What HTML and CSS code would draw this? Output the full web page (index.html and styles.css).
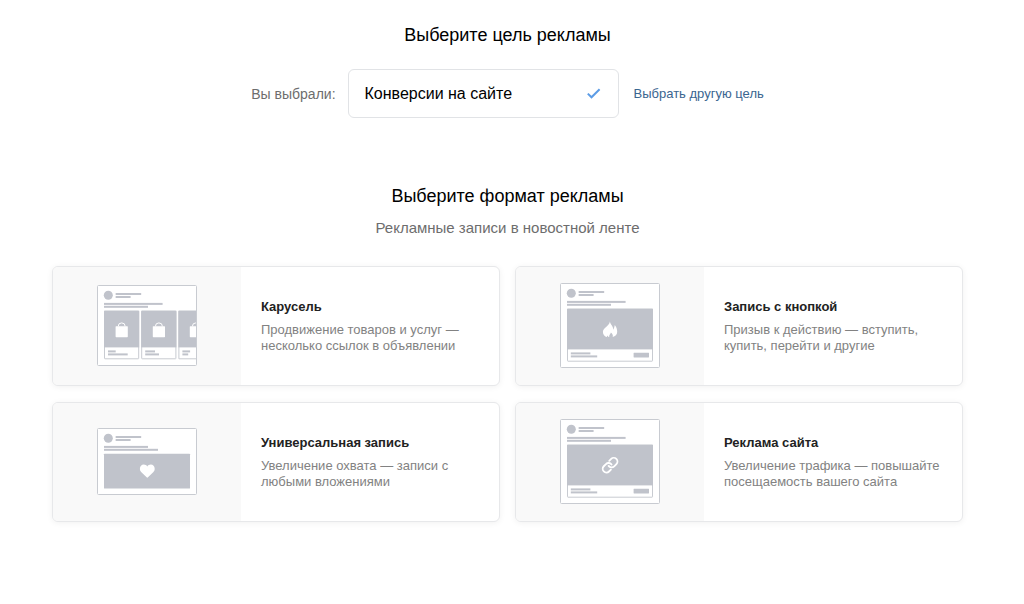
FILE: index.html
```html
<!DOCTYPE html>
<html lang="ru">
<head>
<meta charset="utf-8">
<meta name="viewport" content="width=device-width, initial-scale=1">
<title>Новое объявление</title>
<link rel="stylesheet" href="styles.css">
</head>
<body>
<svg class="defs" aria-hidden="true">
  <symbol id="post-head" viewBox="0 0 100 24">
    <circle cx="11.3" cy="10.3" r="4.5"/>
    <rect x="18.6" y="8" width="25.6" height="2" rx=".5"/>
    <rect x="18.6" y="10.9" width="15" height="2" rx=".5"/>
  </symbol>
</svg>
<main class="page">
  <section class="goal">
    <h2 class="heading">Выберите цель рекламы</h2>
    <div class="goal-row">
      <span class="goal-label" id="goal-label">Вы выбрали:</span>
      <button class="goal-box" type="button" aria-describedby="goal-label">
        <span>Конверсии на сайте</span>
        <svg class="check" viewBox="0 0 16 12" aria-hidden="true"><path d="M1.800 5.600 5.500 9.300 13.600 1.200"/></svg>
      </button>
      <a class="goal-link" href="#">Выбрать другую цель</a>
    </div>
  </section>

  <section class="formats">
    <h2 class="heading">Выберите формат рекламы</h2>
    <p class="subheading">Рекламные записи в новостной ленте</p>
    <div class="cards">
      <button class="card" type="button">
        <span class="preview">
          <svg class="art" width="100" height="81" viewBox="0 0 100 81" aria-hidden="true">
            <rect class="frame" x=".5" y=".5" width="99" height="80" rx="1"/>
            <use href="#post-head" width="100" height="24"/>
            <rect x="7" y="17.9" width="58.6" height="2"/>
            <rect x="7" y="20.8" width="44" height="2"/>
            <rect class="sheet" x="7.5" y="26.2" width="34.2" height="47.6" rx=".5"/>
            <rect x="7" y="25.7" width="35.2" height="36.7"/>
            <rect x="11" y="65.4" width="7.7" height="2"/>
            <rect x="11" y="68.4" width="19.7" height="2"/>
            <rect class="sheet" x="44.7" y="26.2" width="34.2" height="47.6" rx=".5"/>
            <rect x="44.2" y="25.7" width="35.2" height="36.7"/>
            <rect x="48.2" y="65.4" width="9.8" height="2"/>
            <rect x="48.2" y="68.4" width="13.8" height="2"/>
            <path class="sheet" d="M99 26.2H81.9V73.8H99"/>
            <rect x="81.4" y="25.7" width="17.6" height="36.7"/>
            <rect x="85.4" y="65.4" width="7.7" height="2"/>
            <rect x="85.4" y="68.4" width="5.8" height="2"/>
            <g class="glyph">
              <rect x="18.6" y="41.2" width="12.2" height="11" rx=".6"/>
              <path class="handle" d="M21.2 41.4a3.5 3.5 0 0 1 7 0"/>
              <rect x="55.8" y="41.2" width="12.2" height="11" rx=".6"/>
              <path class="handle" d="M58.4 41.4a3.5 3.5 0 0 1 7 0"/>
              <path d="M93.4 41.2H99v11h-5.6q-.6 0-.6-.6v-9.8q0-.6.6-.6z"/>
              <path class="handle" d="M95.4 41.4a3.5 3.5 0 0 1 3.5-3.5"/>
            </g>
          </svg>
        </span>
        <span class="info">
          <span class="title">Карусель</span>
          <span class="text">Продвижение товаров и услуг — несколько ссылок в объявлении</span>
        </span>
      </button>

      <button class="card" type="button">
        <span class="preview">
          <svg class="art" width="100" height="85" viewBox="0 0 100 85" aria-hidden="true">
            <rect class="frame" x=".5" y=".5" width="99" height="84" rx="1"/>
            <use href="#post-head" width="100" height="24"/>
            <rect x="7" y="17.9" width="58.6" height="2"/>
            <rect x="7" y="20.8" width="44" height="2"/>
            <rect class="sheet" x="7.5" y="26.2" width="85" height="52" rx=".5"/>
            <rect x="7" y="25.7" width="86" height="40.7"/>
            <rect x="10.8" y="69.4" width="19.6" height="2"/>
            <rect x="10.8" y="72.4" width="26.4" height="2"/>
            <rect x="73.6" y="69.7" width="15.4" height="4.8" rx=".4"/>
            <path class="glyph" d="M49.9 38.6c.3 3 3.500 4.600 3.300 8.100.9-1 1.200-2.800 1.600-4.600 1.500 1.700 2.400 4.300 2.400 6.700 0 2.700-1.900 4.700-4.500 5.200.5-1.500-.1-3-1.800-4.400-.1 1.600-2.200 2.500-1.700 4.500-.8 0-1.400-.7-1.700-1.500-.5.4-.6.800-.5 1.400-2.400-.5-4.100-2.500-4.100-5.100 0-4.100 6.400-5.500 7-10.300z"/>
          </svg>
        </span>
        <span class="info">
          <span class="title">Запись с кнопкой</span>
          <span class="text">Призыв к действию — вступить, купить, перейти и другие</span>
        </span>
      </button>

      <button class="card" type="button">
        <span class="preview">
          <svg class="art" width="100" height="67" viewBox="0 0 100 67" aria-hidden="true">
            <rect class="frame" x=".5" y=".5" width="99" height="66" rx="1"/>
            <use href="#post-head" width="100" height="24"/>
            <rect x="7" y="17.9" width="44" height="2"/>
            <rect x="7" y="20.8" width="54" height="2"/>
            <rect x="7" y="25.7" width="86" height="34.8" rx=".6"/>
            <path class="glyph" d="M50.700 49.500q-.4.300-.8 0l-5.500-5.300c-1.300-1.300-1.500-2.300-1.500-3.500 0-2.300 1.700-4.100 3.900-4.100 1.500 0 2.700.7 3.500 1.900.8-1.200 2-1.900 3.500-1.900 2.200 0 3.900 1.800 3.900 4.100 0 1.200-.2 2.200-1.500 3.500z"/>
          </svg>
        </span>
        <span class="info">
          <span class="title">Универсальная запись</span>
          <span class="text">Увеличение охвата — записи с любыми вложениями</span>
        </span>
      </button>

      <button class="card" type="button">
        <span class="preview">
          <svg class="art" width="100" height="85" viewBox="0 0 100 85" aria-hidden="true">
            <rect class="frame" x=".5" y=".5" width="99" height="84" rx="1"/>
            <use href="#post-head" width="100" height="24"/>
            <rect x="7" y="17.9" width="58.6" height="2"/>
            <rect x="7" y="20.8" width="44" height="2"/>
            <rect class="sheet" x="7.5" y="26.2" width="85" height="52" rx=".5"/>
            <rect x="7" y="25.7" width="86" height="40.7"/>
            <rect x="10.8" y="69.4" width="19.6" height="2"/>
            <rect x="10.8" y="72.4" width="26.4" height="2"/>
            <rect x="73.6" y="69.7" width="15.4" height="4.8" rx=".4"/>
            <g class="chain" transform="translate(41.2 37.3) scale(.74)">
              <path d="M10 13a5 5 0 0 0 7.540.540l3-3a5 5 0 0 0-7.070-7.070l-2.600 2.600"/>
              <path d="M14 11a5 5 0 0 0-7.540-.540l-3 3a5 5 0 0 0 7.070 7.070l2.600-2.600"/>
            </g>
          </svg>
        </span>
        <span class="info">
          <span class="title">Реклама сайта</span>
          <span class="text">Увеличение трафика — повышайте посещаемость вашего сайта</span>
        </span>
      </button>
    </div>
  </section>
</main>
</body>
</html>
```

FILE: styles.css
```css
* {
  box-sizing: border-box;
}

body {
  margin: 0;
  background: #fff;
  color: #000;
  font-family: "Liberation Sans", Arial, sans-serif;
}

button {
  margin: 0;
  padding: 0;
  font: inherit;
  color: inherit;
  text-align: left;
  cursor: pointer;
}

.defs {
  display: none;
}

.page {
  padding: 24px 61px 40px 52px;
}

.heading {
  margin: 0;
  font-size: 18px;
  line-height: 22px;
  font-weight: 400;
  text-align: center;
}

.goal-row {
  display: flex;
  justify-content: center;
  align-items: center;
  margin-top: 23px;
}

.goal-label {
  margin-right: 12px;
  font-size: 14px;
  line-height: 20px;
  color: #6d6d6d;
}

.goal-box {
  display: flex;
  justify-content: space-between;
  align-items: center;
  width: 271px;
  height: 49px;
  padding: 0 16px;
  border: 1px solid #e1e3e6;
  border-radius: 6px;
  background: #fff;
  font-size: 16px;
}

.check {
  width: 16px;
  height: 12px;
  fill: none;
  stroke: #5c9ce6;
  stroke-width: 2;
}

.goal-link {
  margin-left: 15px;
  font-size: 13px;
  line-height: 20px;
  color: #3a6590;
  text-decoration: none;
}

.formats {
  margin-top: 67px;
}

.subheading {
  margin: 11px 0 0;
  font-size: 15px;
  line-height: 20px;
  text-align: center;
  color: #6d6d6d;
}

.cards {
  display: grid;
  grid-template-columns: 1fr 1fr;
  gap: 16px 15px;
  margin-top: 28px;
}

.card {
  display: flex;
  min-height: 120px;
  border: 1px solid #e7e8ea;
  border-radius: 6px;
  background: #fff;
  box-shadow: 0 1px 6px rgba(0, 0, 0, 0.06);
  overflow: hidden;
}

.preview {
  display: flex;
  flex: 0 0 188px;
  align-self: stretch;
  justify-content: center;
  align-items: center;
  padding-bottom: 2px;
  background: #f9f9f9;
}

.art {
  display: block;
  fill: #c0c3cb;
}

.frame,
.sheet {
  fill: #fff;
  stroke: #c8cbd1;
  stroke-width: 1;
}

.glyph {
  fill: #fff;
}

.handle,
.chain {
  fill: none;
  stroke: #fff;
}

.chain {
  stroke-width: 2.5;
  stroke-linecap: round;
}

.info {
  display: flex;
  flex: 1;
  flex-direction: column;
  align-self: center;
  gap: 7px;
  padding: 1px 20px 0;
  font-size: 13px;
  line-height: 16px;
}

.title {
  font-weight: 700;
  color: #222;
}

.text {
  color: #828282;
}
```
